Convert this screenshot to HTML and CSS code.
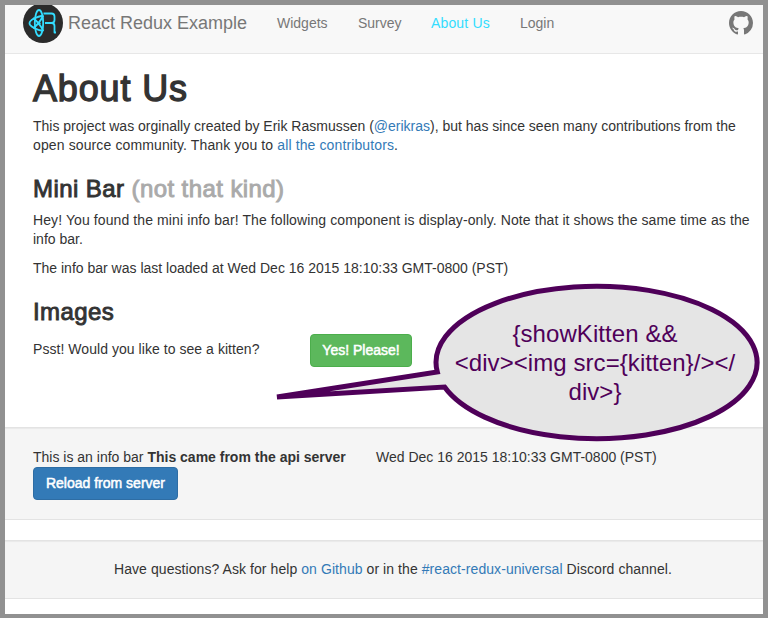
FILE: index.html
```html
<!DOCTYPE html>
<html lang="en">
<head>
<meta charset="utf-8">
<title>About Us</title>
<link rel="stylesheet" href="styles.css">
</head>
<body>
<div class="frame">
  <nav class="navbar">
    <a class="brand">
      <svg class="logo" viewBox="0 0 40 40" width="40" height="40">
        <circle cx="20" cy="20" r="20" fill="#2b2b2b"/>
        <g fill="none" stroke="#33ddff" stroke-width="1.8" stroke-linejoin="round">
          <ellipse cx="16" cy="20" rx="4.2" ry="13"/>
          <path d="M20.3 12.5C14 13.5 6.5 17 6.5 20.3C6.5 23.5 14 27 20.3 28"/>
          <path d="M20.3 12.5C18 17 14 22.5 10 25.3M20.3 28C18 23 14 18 10 15"/>
          <path d="M20.5 10.5H28.5Q31.5 10.5 31.5 13.5V17Q31.5 20 28.5 20H22M28.5 20Q31.5 20 31.5 23V29.5H33"/>
        </g>
        <circle cx="16" cy="20.2" r="1.5" fill="#33ddff"/>
      </svg>
      <span class="brand-name">React Redux Example</span>
    </a>
    <a class="nav-link widgets">Widgets</a>
    <a class="nav-link survey">Survey</a>
    <a class="nav-link about active">About Us</a>
    <a class="nav-link login">Login</a>
    <svg class="github" viewBox="0 0 16 16" width="24" height="24"><path fill="#777" d="M8 0C3.58 0 0 3.58 0 8c0 3.54 2.29 6.53 5.47 7.59.4.07.55-.17.55-.38 0-.19-.01-.82-.01-1.49-2.01.37-2.53-.49-2.69-.94-.09-.23-.48-.94-.82-1.13-.28-.15-.68-.52-.01-.53.63-.01 1.08.58 1.23.82.72 1.21 1.87.87 2.33.66.07-.52.28-.87.51-1.07-1.78-.2-3.64-.89-3.64-3.95 0-.87.31-1.59.82-2.15-.08-.2-.36-1.02.08-2.12 0 0 .67-.21 2.2.82.64-.18 1.32-.27 2-.27s1.36.09 2 .27c1.53-1.04 2.2-.82 2.2-.82.44 1.1.16 1.92.08 2.12.51.56.82 1.27.82 2.15 0 3.07-1.87 3.75-3.65 3.95.29.25.54.73.54 1.48 0 1.07-.01 1.93-.01 2.2 0 .21.15.46.55.38A8.01 8.01 0 0 0 16 8c0-4.42-3.58-8-8-8z"/></svg>
  </nav>
  <main class="content">
    <h1>About Us</h1>
    <p><span class="l1">This project was orginally created by Erik Rasmussen (<a>@erikras</a>), but has since seen many contributions from the</span><br><span class="l2">open source community. Thank you to <a>all the contributors</a>.</span></p>
    <h2>Mini Bar <small>(not that kind)</small></h2>
    <p><span class="l3">Hey! You found the mini info bar! The following component is display-only. Note that it shows the same time as the</span><br><span class="l4">info bar.</span></p>
    <p><span class="l5">The info bar was last loaded at Wed Dec 16 2015 18:10:33 GMT-0800 (PST)</span></p>
    <h2 class="images">Images</h2>
    <div class="kitten"><span class="question">Psst! Would you like to see a kitten?</span><button class="btn success"><span>Yes! Please!</span></button></div>
  </main>
  <section class="well info">
    <div class="info-line"><span class="message">This is an info bar <strong>This came from the api server</strong></span><span class="time">Wed Dec 16 2015 18:10:33 GMT-0800 (PST)</span></div>
    <button class="btn primary"><span>Reload from server</span></button>
  </section>
  <footer class="well help"><span>Have questions? Ask for help <a>on Github</a> or in the <a>#react-redux-universal</a> Discord channel.</span></footer>
</div>
<div class="callout">
  <svg class="bubble" viewBox="0 0 490 164" width="490" height="164">
    <path d="M163.3 92A160.5 76.2 0 1 1 170.6 107L3 117Z" fill="#e5e5e5" stroke="#4f0059" stroke-width="5"/>
  </svg>
  <div class="callout-text">{showKitten &amp;&amp;<br>&lt;div&gt;&lt;img src={kitten}/&gt;&lt;/<br>div&gt;}</div>
</div>
</body>
</html>
```
FILE: styles.css
```css
* { box-sizing: border-box; }
body {
  margin: 0;
  font: 14px/19px "Liberation Sans", Arial, sans-serif;
  color: #333;
}
.frame {
  width: 768px;
  height: 618px;
  border: 5px solid #919191;
  border-bottom-width: 4px;
  background: #fff;
  overflow: hidden;
}
.navbar {
  display: flex;
  height: 49px;
  padding-left: 18px;
  background: #f8f8f8;
  border-bottom: 1px solid #e7e7e7;
  color: #777;
  white-space: nowrap;
}
.brand { display: flex; width: 254px; }
.logo { margin-top: -2px; flex: none; }
.brand-name { font-size: 18px; line-height: 36px; margin-left: 5px; }
.nav-link { line-height: 37px; }
.widgets { width: 81px; }
.survey { width: 73px; }
.about { width: 89px; letter-spacing: 0.15px; }
.active { color: #33ddff; }
.github { margin: 6px 10px 0 auto; }
.content { height: 373px; padding: 15px 0 0 28px; white-space: nowrap; }
h1, h2 { margin: 0; font-weight: 400; letter-spacing: 0.42px; -webkit-text-stroke: 0.9px currentColor; }
h1 { font-size: 36px; line-height: 40px; margin-bottom: 8px; letter-spacing: 0.85px; -webkit-text-stroke-width: 1.3px; }
h2 { font-size: 24px; line-height: 26px; margin: 21px 0 9px; }
h2 small { font-size: 24px; color: #aaa; }
p { margin: 0 0 10px; }
.l2 { letter-spacing: 0.12px; }
.l3 { letter-spacing: 0.1px; }
a { color: #337ab7; }
.navbar a { color: inherit; }
.navbar a.active { color: #33ddff; }
.kitten { display: flex; line-height: 30px; }
.question { width: 277px; letter-spacing: 0.05px; }
.btn {
  display: block;
  height: 33px;
  padding: 0;
  border: 1px solid;
  border-radius: 4px;
  color: #fff;
  font: 14px/31px "Liberation Sans", Arial, sans-serif;
  -webkit-text-stroke: 0.5px currentColor;
  white-space: nowrap;
}
.success { width: 102px; background: #5cb85c; border-color: #4cae4c; }
.primary { width: 145px; background: #337ab7; border-color: #2e6da4; }
.well {
  background: #f5f5f5;
  border: solid #e3e3e3;
  border-width: 1px 0;
  box-shadow: inset 0 1px 1px rgba(0, 0, 0, 0.05);
}
.info { height: 93px; padding: 20px 28px 0; margin-bottom: 20px; }
.info-line { display: flex; white-space: nowrap; }
.message { width: 343px; }
.help { height: 59px; line-height: 57px; padding-left: 109px; letter-spacing: 0.07px; white-space: nowrap; }
.callout { position: absolute; left: 274px; top: 280px; width: 490px; height: 164px; }
.bubble { display: block; }
.callout-text {
  position: absolute;
  left: 171px;
  top: 39px;
  width: 300px;
  text-align: center;
  white-space: nowrap;
  color: #4f0059;
  font-size: 24px;
  line-height: 29px;
  letter-spacing: 0.07px;
}
```
